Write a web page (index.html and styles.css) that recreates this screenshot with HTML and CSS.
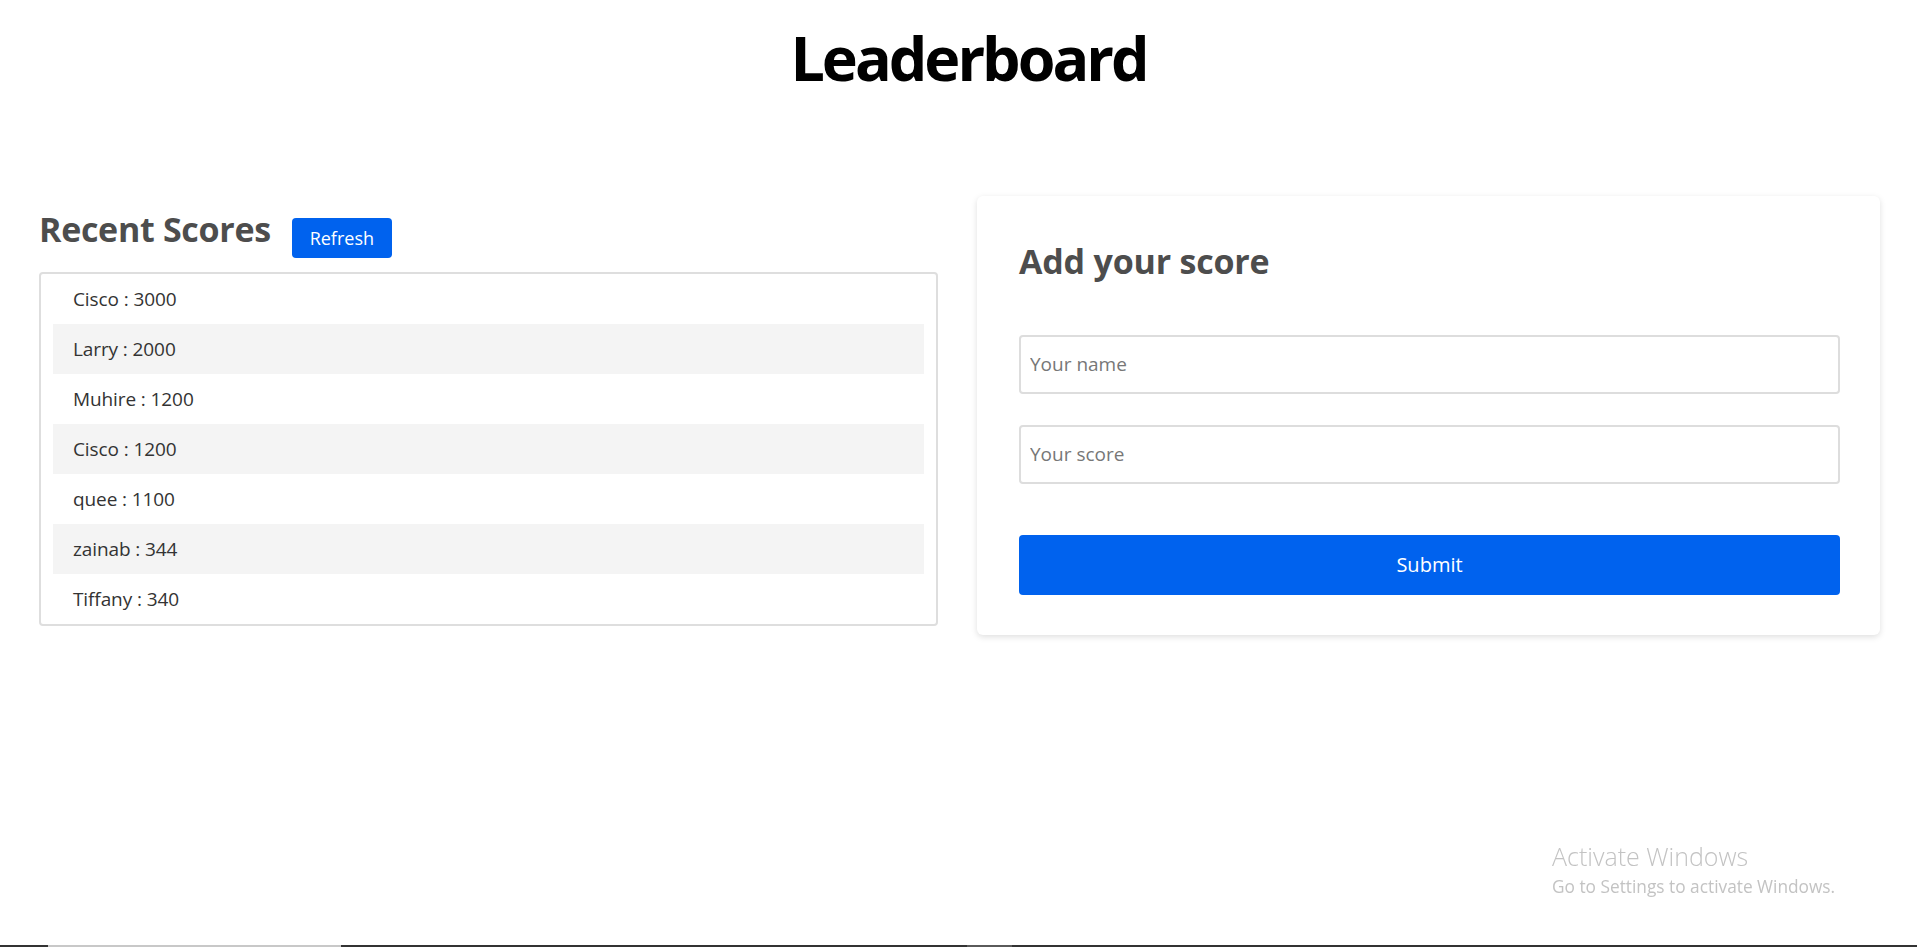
FILE: index.html
```html
<!DOCTYPE html>
<html lang="en">
<head>
<meta charset="utf-8">
<title>Leaderboard</title>
<link rel="stylesheet" href="styles.css">
</head>
<body>
<h1 class="title">Leaderboard</h1>
<main class="layout">
  <section class="scores">
    <div class="scores-head">
      <h2 class="section-title">Recent Scores</h2>
      <button class="btn btn-small" type="button">Refresh</button>
    </div>
    <ul class="score-list">
      <li class="score-item">Cisco : 3000</li>
      <li class="score-item">Larry : 2000</li>
      <li class="score-item">Muhire : 1200</li>
      <li class="score-item">Cisco : 1200</li>
      <li class="score-item">quee : 1100</li>
      <li class="score-item">zainab : 344</li>
      <li class="score-item">Tiffany : 340</li>
    </ul>
  </section>
  <section class="card">
    <h2 class="section-title card-title">Add your score</h2>
    <form class="score-form">
      <input class="field" type="text" placeholder="Your name">
      <input class="field field-second" type="text" placeholder="Your score">
      <button class="btn btn-block" type="button">Submit</button>
    </form>
  </section>
</main>
<div class="watermark">
  <div class="wm-title">Activate Windows</div>
  <div class="wm-sub">Go to Settings to activate Windows.</div>
</div>
<div class="taskbar-edge">
  <div class="edge-seg edge-a"></div>
  <div class="edge-seg edge-b"></div>
  <div class="edge-seg edge-c"></div>
  <div class="edge-seg edge-d"></div>
</div>
</body>
</html>
```

FILE: styles.css
```css
* { box-sizing: border-box; }

html, body {
  margin: 0;
  padding: 0;
  background: #ffffff;
}

body {
  font-family: "Open Sans", "Noto Sans", sans-serif;
  color: #333333;
  min-height: 947px;
}

.title {
  margin: 21px 0 0 0;
  padding-left: 20px;
  text-align: center;
  font-size: 61px;
  line-height: 1.2;
  font-weight: 700;
  color: #000000;
  letter-spacing: -3px;
}

.layout {
  display: flex;
  align-items: flex-start;
  gap: 39px;
  padding: 0 37px 0 39px;
  margin-top: 102px;
}

.scores {
  flex: 0 0 899px;
  margin-top: -1px;
}

.scores-head {
  display: flex;
  align-items: flex-start;
  gap: 21px;
  margin-top: 14px;
}

.section-title {
  margin: 0;
  font-size: 34px;
  line-height: 1.2;
  font-weight: 700;
  color: #4d4d4d;
  letter-spacing: -0.3px;
}

.btn {
  border: none;
  background: #0062ee;
  color: #ffffff;
  font-family: inherit;
  cursor: pointer;
  border-radius: 4px;
}

.btn-small {
  margin-top: 9px;
  width: 100px;
  height: 40px;
  font-size: 18px;
  padding: 0;
}

.score-list {
  list-style: none;
  margin: 14px 0 0 0;
  padding: 0 12px;
  border: 2px solid #dedede;
  border-radius: 4px;
}

.score-item {
  height: 50px;
  line-height: 51px;
  padding-left: 20px;
  font-size: 19px;
  letter-spacing: -0.1px;
  color: #333333;
}

.score-item:nth-child(even) {
  background: #f4f4f4;
}

.card {
  flex: 0 0 903px;
  background: #ffffff;
  border-radius: 6px;
  padding: 40px 40px 40px 42px;
  box-shadow: 0 2px 6px rgba(0, 0, 0, 0.13);
}

.card-title {
  margin-top: 5px;
  letter-spacing: -0.2px;
}

.score-form {
  display: flex;
  flex-direction: column;
  margin-top: 53px;
}

.field {
  height: 59px;
  border: 2px solid #dddddd;
  border-radius: 4px;
  padding: 0 9px;
  font-family: inherit;
  font-size: 19px;
  color: #333333;
  outline: none;
}

.field::placeholder {
  color: #777777;
}

.field-second {
  margin-top: 31px;
}

.btn-block {
  margin-top: 51px;
  height: 60px;
  font-size: 20px;
}

.watermark {
  position: fixed;
  left: 1552px;
  top: 840px;
  color: #c3c3c3;
  font-family: "Open Sans", "Noto Sans", sans-serif;
  pointer-events: none;
}

.wm-title {
  font-size: 25px;
  font-weight: 300;
  line-height: 32px;
}

.wm-sub {
  font-size: 17.3px;
  line-height: 29px;
}

.taskbar-edge {
  position: fixed;
  left: 0;
  right: 0;
  bottom: 0;
  height: 2px;
  background: #333333;
  display: flex;
}

.edge-seg { height: 2px; }
.edge-a { width: 48px; }
.edge-b { width: 293px; background: #c8c8c8; }
.edge-c { width: 626px; }
.edge-d { width: 45px; background: #5a5a5a; }
```
